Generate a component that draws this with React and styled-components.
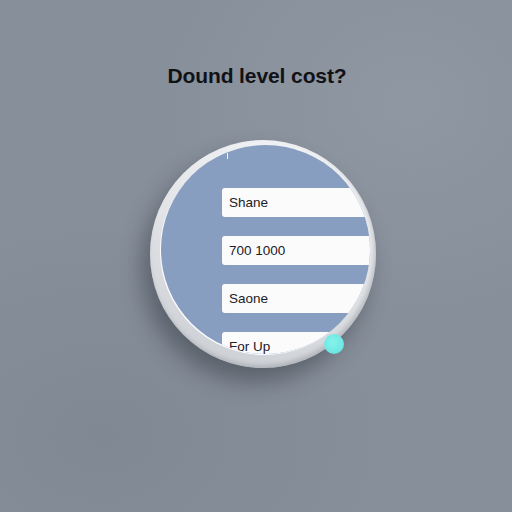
import React from 'react'
import styled, { createGlobalStyle } from 'styled-components'

const GlobalStyle = createGlobalStyle`
    html, body {
        margin: 0;
        padding: 0;
    }

    body {
        font-family: "Liberation Sans", Arial, sans-serif;
        background: #868e99;
    }
`;

const Page = styled.main`
    width: 512px;
    height: 512px;
    box-sizing: border-box;
    padding: 62px 0 0 6px;
    display: flex;
    flex-direction: column;
    align-items: center;
    background:
        radial-gradient(ellipse 70% 60% at 80% 20%, rgba(156, 164, 174, 0.4), transparent 70%),
        radial-gradient(ellipse 80% 60% at 20% 85%, rgba(112, 120, 132, 0.3), transparent 70%),
        #878f9a;
`;

const Title = styled.h1`
    margin: 0 0 0 -4px;
    font-size: 21px;
    font-weight: 700;
    line-height: 28px;
    color: #101216;
    letter-spacing: -0.1px;
`;

const Dial = styled.div`
    position: relative;
    margin-top: 50px;
    margin-left: 8px;
    width: 226px;
    height: 228px;
    box-sizing: border-box;
    padding: 5px 0 0 11px;
    border-radius: 50%;
    background: linear-gradient(200deg, #f4f5f7 0%, #e3e5e8 45%, #c9ccd1 100%);
    box-shadow:
        -8px 14px 22px rgba(40, 46, 56, 0.45),
        inset -2px -3px 4px rgba(120, 126, 136, 0.35);
`;

const Face = styled.div`
    position: relative;
    width: 209px;
    height: 209px;
    border-radius: 50%;
    overflow: hidden;
    background: #889ec0;
    box-shadow: -1px 1px 0 #fbfcfd;
    box-sizing: border-box;
    padding: 43px 0 0 61px;
    display: flex;
    flex-direction: column;
    gap: 19px;
`;

const Tick = styled.span`
    position: absolute;
    left: 66px;
    top: 8px;
    width: 1px;
    height: 6px;
    background: #f4f6fa;
`;

const Field = styled.div`
    flex: none;
    width: 200px;
    height: 29px;
    box-sizing: border-box;
    padding-left: 7px;
    display: flex;
    align-items: center;
    border-radius: 3px;
    background: #fbfbfc;
    font-size: 13.5px;
    color: #1d2025;
`;

const Knob = styled.span`
    position: absolute;
    left: 174px;
    top: 194px;
    width: 20px;
    height: 20px;
    border-radius: 50%;
    background: radial-gradient(circle at 45% 40%, #86f2ec, #62e2dd);
`;

const values = ['Shane', '700 1000', 'Saone', 'For Up'];

const App = () => (
    <>
        <GlobalStyle />
        <Page>
            <Title>Dound level cost?</Title>
            <Dial>
                <Face>
                    <Tick />
                    {values.map(v => (
                        <Field key={v}>{v}</Field>
                    ))}
                </Face>
                <Knob />
            </Dial>
        </Page>
    </>
)

export default App
